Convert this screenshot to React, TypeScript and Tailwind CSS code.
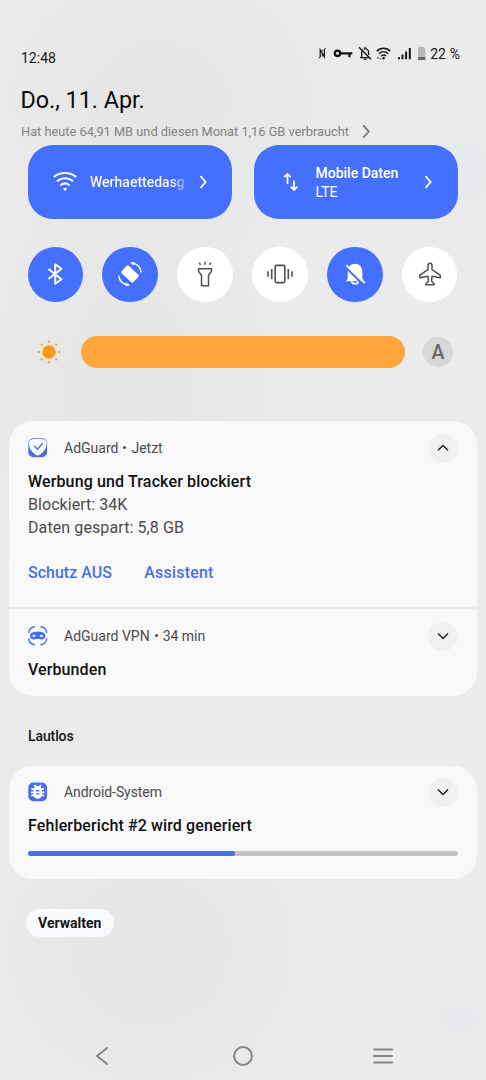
import React from "react";

function Chevron({ dir }: { dir: "up" | "down" }) {
  return (
    <span className="flex h-[29px] w-[30px] items-center justify-center rounded-full bg-[#f0f0f2]">
      <svg width="12" height="8" viewBox="0 0 12 8" fill="none" stroke="#1c1c1e" strokeWidth="1.4">
        <path d={dir === "up" ? "M1 6.3 6 1.4l5 4.9" : "M1 1.5l5 4.9 5-4.9"} />
      </svg>
    </span>
  );
}

function StatusIcons() {
  return (
    <svg className="shrink-0" width="110" height="20" viewBox="318 44 110 20" fill="none" stroke="#151515">
      {/* NFC */}
      <path d="M321.2 57.3V49.6L325.4 56.800V49" strokeWidth="1.2" />
      <path d="M319.8 58l1.500-1M326.700 48.300l-1.500 1M323.300 53.200v3.300M323.300 49.800v1.500" strokeWidth="1" />
      {/* VPN key */}
      <circle cx="338.5" cy="53.3" r="2.7" strokeWidth="2.3" />
      <path d="M341.5 53.3h11.900M350.400 53.300v4" strokeWidth="2.3" />
      {/* muted bell */}
      <path d="M361 57.700h9.500M362.700 57.500v-4.700c0-1.300.4-2.300 1.200-3M364.800 49.100l1.300-.4v-1.900M366.100 48.700c2.100.2 3.500 1.900 3.500 4.100v2.200" strokeWidth="1.3" />
      <path d="M360 47.200l12 12" strokeWidth="1.4" />
      <path d="M364.700 58.700h2.800v1.200h-2.800z" fill="#151515" stroke="none" />
      {/* wifi */}
      <path d="M377.800 51.200c3.800-4 9.600-4 13.400 0M379.900 53.700c2.700-2.700 6.500-2.700 9.200 0M382.100 56.100c1.500-1.400 3.300-1.400 4.800 0" strokeWidth="1.6" />
      <circle cx="384.500" cy="58.300" r="1.200" fill="#151515" stroke="none" />
      <path d="M378.200 57.900h1.300M380.700 58.600h1" strokeWidth="1.3" />
      {/* signal */}
      <path d="M400 57.300v2M403.500 54.600v4.700M407.100 51.600v7.700M410.800 47.900v11.400" strokeWidth="2" />
      {/* battery */}
      <path d="M420.300 46.800h4.700l.2.700h.3c.5 0 .8.3.8.8v10.800c0 .5-.3.900-.8.900h-5.700c-.5 0-.8-.4-.8-.9V48.300c0-.5.3-.8.8-.8h.3z" fill="#b9b9b9" stroke="none" />
      <path d="M419 56.900h7.300v2.200c0 .5-.3.900-.8.900h-5.700c-.5 0-.8-.4-.8-.9z" fill="#666" stroke="none" />
    </svg>
  );
}

function TileArrow() {
  return (
    <svg width="10" height="16" viewBox="0 0 10 16" fill="none" stroke="#fff" strokeWidth="1.9">
      <path d="M2.500 2l5 6-5 6" />
    </svg>
  );
}

function Toggle({ on, children }: { on?: boolean; children: React.ReactNode }) {
  return (
    <div className={"flex size-[55.5px] items-center justify-center rounded-full " + (on ? "bg-[#456fff]" : "bg-white")}>
      <svg width="32" height="32" viewBox="-16 -16 32 32" fill="none">
        {children}
      </svg>
    </div>
  );
}

const dots = [0, 45, 90, 135, 180, 225, 270, 315];

function Header({ icon, label, dir }: { icon: React.ReactNode; label: React.ReactNode; dir: "up" | "down" }) {
  return (
    <div className="flex h-[29px] items-center pr-[19px] pl-[18.5px]">
      <span className="w-[36.5px] shrink-0">{icon}</span>
      <span className="flex-1 text-[14px] text-[#4b4b4e]">{label}</span>
      <Chevron dir={dir} />
    </div>
  );
}

function Dot() {
  return <span className="mx-[5px] inline-block size-[3px] rounded-full bg-[#4b4b4e] align-[3.5px]" />;
}

export default function App() {
  return (
    <div className="flex h-[1080px] w-[486px] flex-col overflow-hidden bg-[#ebebeb] bg-[radial-gradient(ellipse_200px_170px_at_160px_100px,#e5e5e5,transparent),radial-gradient(ellipse_180px_300px_at_130px_390px,#e5e5e5,transparent),radial-gradient(ellipse_180px_170px_at_150px_950px,#e4e4e4,transparent),radial-gradient(ellipse_80px_120px_at_470px_170px,#e7e9ec,transparent),radial-gradient(ellipse_80px_60px_at_460px_1020px,#e7e9ec,transparent)] font-[Roboto,sans-serif] whitespace-nowrap">
      <div className="flex h-[84px] justify-between pr-[26px] pl-[21px] text-[14px] leading-5 text-[#151515]">
        <span className="pt-12">12:48</span>
        <div className="flex items-start pt-11">
          <StatusIcons />
          <span className="ml-[3px] tracking-[0.1px]">22 %</span>
        </div>
      </div>
      <div className="h-[38px] pl-[20.5px] text-[23.3px] leading-8 text-[#0b0b0b]">Do., 11. Apr.</div>
      <div className="flex h-[23px] pl-[21px] text-[12.8px] leading-5 text-[#828282]">
        <span className="w-[329px]">Hat heute 64,91 MB und diesen Monat 1,16 GB verbraucht</span>
        <svg className="mt-[2px] ml-[11px]" width="10" height="16" viewBox="0 0 10 16" fill="none" stroke="#757575" strokeWidth="1.8">
          <path d="M2.3 1.3 7.7 7.5 2.3 13.7" />
        </svg>
      </div>

      <div className="flex gap-[22px] px-[28px]">
        <div className="flex h-[74px] w-[204px] items-center rounded-[25px] bg-[#456fff] pl-[24px]">
          <svg width="26" height="24" viewBox="0 0 26 24" fill="none" stroke="#fff" strokeWidth="2" strokeLinecap="round">
            <path d="M2.5 6.5c6-4.600 15-4.600 21 0M5.600 10.800c4.300-3.300 10.500-3.300 14.800 0M8.900 15c2.500-2 5.700-2 8.200 0" />
            <path d="M11 18.500q2-1.400 4 0L13 21.200z" fill="#fff" stroke="none" />
          </svg>
          <span className="ml-[12px] w-[95px] overflow-hidden bg-linear-to-r from-white from-85% to-white/30 bg-clip-text text-[14px] font-medium text-transparent">Werhaettedasg</span>
          <span className="ml-[12.5px]"><TileArrow /></span>
        </div>
        <div className="flex h-[74px] w-[204px] items-center rounded-[25px] bg-[#456fff] pl-[28px]">
          <svg width="18" height="22" viewBox="0 0 18 22" fill="none" stroke="#fff" strokeWidth="1.8">
            <path d="M5.500 13V3.500M2.200 6.200 5.500 2.900l3.300 3.300M12 9.500v8.500M8.700 15.600l3.300 3.300 3.300-3.300" />
          </svg>
          <div className="ml-[15.5px] w-[107.5px] pt-px text-[14px] leading-[18.5px] text-white">
            <div className="font-medium">Mobile Daten</div>
            <div>LTE</div>
          </div>
          <TileArrow />
        </div>
      </div>

      <div className="mt-[27.5px] flex h-[55.5px] justify-between pr-[28.5px] pl-[27.5px]">
        <Toggle on>
          <path d="M-6.500-5 6.500 5.200.2 9.700V-9.700L6.500-5.200-6.500 5" stroke="#fff" strokeWidth="2" strokeLinejoin="round" />
        </Toggle>
        <Toggle on>
          <rect x="-5.200" y="-8" width="10.400" height="16" rx="1.400" fill="#fff" transform="rotate(-47)" />
          <path d="M1.200-10.800C6.800-11 10.800-7 11.200-1.500M-1.200 10.800C-6.800 11-10.800 7-11.200 1.500" stroke="#fff" strokeWidth="1.500" />
          <path d="M0-11.600l4.600-.4-1 3.600zM0 11.600l-4.600.4 1-3.600z" fill="#fff" />
        </Toggle>
        <Toggle>
          <path d="M-6.500-5.300h13v2.400L3.500 1.500v10.200h-7V1.500l-3-4.400z" stroke="#4f4f4f" strokeWidth="1.500" strokeLinejoin="round" />
          <path d="M0-12.200v3M-5.700-11.400l1.200 2.300M5.700-11.400l-1.200 2.300" stroke="#4f4f4f" strokeWidth="1.400" />
        </Toggle>
        <Toggle>
          <rect x="-4.800" y="-8.600" width="9.600" height="17.200" rx="1.500" stroke="#4f4f4f" strokeWidth="1.600" />
          <path d="M-8.300-5v10M8.300-5v10M-12-2.700v5.400M12-2.700v5.400" stroke="#4f4f4f" strokeWidth="1.600" />
        </Toggle>
        <Toggle on>
          <path d="M-7.300 4.500V-2.500C-7.300-7-4.500-10.200 0-10.200S7.300-7 7.300-2.500v6.500l1.500 3.300H-9z" fill="#fff" />
          <path d="M-3.500 7.500C-2.800 10.600 2.800 10.600 3.500 7.500" stroke="#fff" strokeWidth="1.500" />
          <path d="M-10-7.200 8.500 10.800" stroke="#456fff" strokeWidth="2.200" />
          <path d="M-8.800-8.800 9.800 9.200" stroke="#fff" strokeWidth="1.700" />
        </Toggle>
        <Toggle>
          <path d="M0-10.800c-1.400 0-2 1.100-2 2.500v4L-10.200 1.200v2.600L-2 2.200l.4 5.100-2.500 2.400v1.100H4.100V9.700L1.600 7.300 2 2.200l8.200 1.600V1.200L2-4.300v-4c0-1.400-.6-2.500-2-2.500z" stroke="#4f4f4f" strokeWidth="1.500" strokeLinejoin="round" />
        </Toggle>
      </div>

      <div className="mt-[34px] flex h-[32px] items-center pl-[36px]">
        <svg width="26" height="26" viewBox="-13 -13 26 26" fill="#ff981f">
          <circle r="6.800" />
          {dots.map((a) => (
            <circle key={a} cy="-10.300" r="1.200" transform={`rotate(${a})`} />
          ))}
        </svg>
        <div className="ml-[19px] h-[31.5px] w-[324px] rounded-full bg-[#ffa63d]" />
        <span className="ml-[18px] flex size-[30px] items-center justify-center rounded-full bg-[#d7d7d7] pt-px text-[19.5px] font-medium text-[#686868]">A</span>
      </div>

      <div className="mt-[53px] ml-[9px] flex w-[468px] flex-col gap-[2px] overflow-hidden rounded-[24px] bg-[#ebebeb]">
        <section className="h-[185.5px] bg-[#f8f8f8] pt-[12.5px]">
          <Header
            dir="up"
            label={<>AdGuard<Dot />Jetzt</>}
            icon={
              <svg width="20" height="20" viewBox="0 0 20 20" fill="none">
                <rect x=".3" y=".3" width="18.800" height="19" rx="5" fill="#4a70e8" />
                <path d="M.8 4.200C1.500 1.500 4 1 9.700 1s8.200.5 8.900 3.200c.3 5-2.100 10-8.900 13.600C2.900 14.200.5 9.200.8 4.200z" fill="#f8f8f8" />
                <path d="M6.300 8l3.200 3.200 5.300-6" stroke="#4a70e8" strokeWidth="1.300" />
              </svg>
            }
          />
          <div className="px-[19px] pt-[7px] text-[16px] leading-[23px] text-[#4b4b4e]">
            <div className="font-medium tracking-[0.14px] text-[#111]">Werbung und Tracker blockiert</div>
            <div className="tracking-[0.05px]">Blockiert: 34K</div>
            <div className="tracking-[0.1px]">Daten gespart: 5,8 GB</div>
            <div className="mt-[22.5px] flex gap-[32.5px] font-medium text-[#4a70e0]">
              <span>Schutz AUS</span>
              <span className="tracking-[0.2px]">Assistent</span>
            </div>
          </div>
        </section>
        <section className="h-[87px] bg-[#f8f8f8] pt-[13px]">
          <Header
            dir="down"
            label={<>AdGuard VPN<Dot />34 min</>}
            icon={
              <svg width="20" height="20" viewBox="0 0 20 20" fill="none">
                <path d="M.6 7C1 3.500 3.300 1 7 .7M12.400.7C16.100 1 18.400 3.500 18.800 7M18.800 12.400c-.4 3.500-2.700 6-6.400 6.300M7 18.700C3.300 18.400 1 15.900.6 12.400" stroke="#4a70e8" strokeWidth="1.400" />
                <path d="M6 6c2.300-.7 5.100-.7 7.400 0 2.600.3 4 1.800 4 4s-1.500 3.500-3.800 3.500c-1.300 0-1.800-.6-2.500-.6H8.300c-.7 0-1.200.6-2.500.6C3.500 13.500 2 12.200 2 10s1.400-3.700 4-4z" fill="#4a70e8" />
                <rect x="4.800" y="8.700" width="2.400" height="2.400" rx=".6" fill="#f3f6ff" />
                <rect x="12.200" y="8.700" width="2.400" height="2.400" rx=".6" fill="#f3f6ff" />
              </svg>
            }
          />
          <div className="px-[19px] pt-[7.5px] text-[16px] leading-[23px] font-medium tracking-[0.1px] text-[#111]">Verbunden</div>
        </section>
      </div>

      <div className="mt-[30px] h-[40px] pl-[28px] text-[14px] leading-5 font-medium tracking-[-0.1px] text-[#151515]">Lautlos</div>

      <section className="ml-[9px] h-[113.5px] w-[468px] rounded-[24px] bg-[#f8f8f8] pt-[12px]">
        <Header
          dir="down"
          label={<span className="tracking-[-0.08px]">Android-System</span>}
          icon={
            <svg width="20" height="20" viewBox="0 0 20 20" fill="none">
              <rect x=".3" y=".5" width="18.800" height="18.800" rx="5" fill="#4a70e8" />
              <path d="M5.400 8.200a4.300 4.300 0 0 1 8.600 0v4.200a4.300 4.300 0 0 1-8.600 0z" fill="#fff" />
              <path d="M6.500 3 8.200 5.200M12.900 3 11.200 5.200M3.400 7.200H16M3 10.300h13.400M3.400 13.400H16" stroke="#fff" strokeWidth="1.700" />
              <path d="M8 8.700h3.400M8 11.900h3.400" stroke="#4a70e8" strokeWidth="1.400" />
            </svg>
          }
        />
        <div className="px-[19px] pt-[7px] text-[16px] leading-[23px] font-medium tracking-[0.12px] text-[#111]">Fehlerbericht #2 wird generiert</div>
        <div className="mx-[19px] mt-[14.5px] h-[5px] overflow-hidden rounded-full bg-[#c2c2c2]">
          <div className="h-full w-[206.5px] rounded-r-full bg-[#4a70e8]" />
        </div>
      </section>

      <button className="mt-[30px] ml-[25.5px] h-[28px] w-[88.5px] shrink-0 rounded-full bg-[#f8f9fd] text-[14px] font-bold text-[#151515]">Verwalten</button>

      <nav className="mt-auto flex h-[49px] shrink-0 items-center pl-[95px]">
        <svg width="14" height="20" viewBox="0 0 14 20" fill="none" stroke="#858585" strokeWidth="2" strokeLinecap="round" strokeLinejoin="round">
          <path d="M12 2 2 10l10 8" />
        </svg>
        <svg className="ml-[123px]" width="22" height="22" viewBox="0 0 22 22" fill="none" stroke="#858585" strokeWidth="2">
          <circle cx="11" cy="11" r="8.900" />
        </svg>
        <svg className="ml-[118px]" width="22" height="18" viewBox="0 0 22 18" stroke="#858585" strokeWidth="2" strokeLinecap="round">
          <path d="M2 2.500h18M2 9h18M2 15.500h18" />
        </svg>
      </nav>
    </div>
  );
}
